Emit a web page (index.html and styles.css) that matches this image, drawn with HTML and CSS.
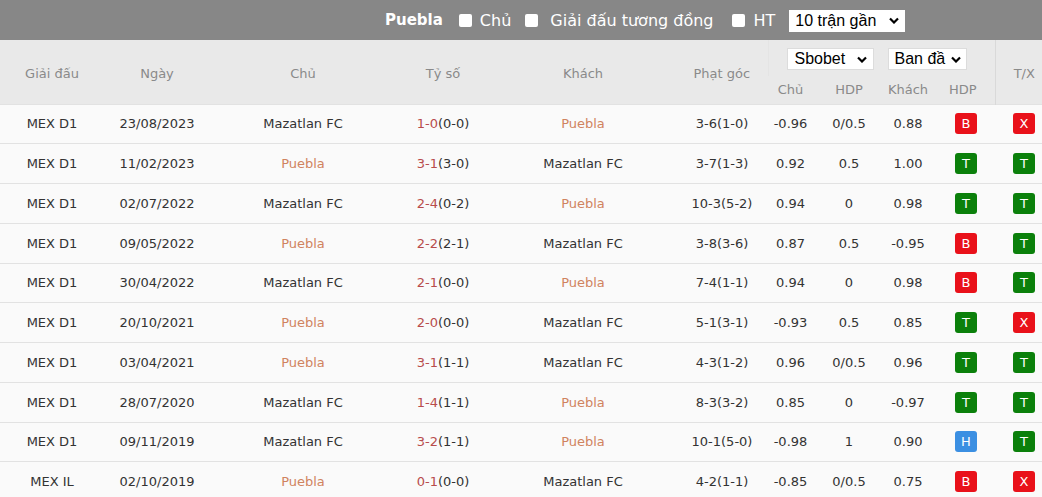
FILE: index.html
```html
<!DOCTYPE html>
<html lang="vi">
<head>
<meta charset="utf-8">
<title>Puebla</title>
<link rel="stylesheet" href="styles.css">
</head>
<body>
<div class="topbar">
  <span class="team">Puebla</span>
  <label class="opt opt-home"><span class="box"></span>Chủ</label>
  <label class="opt opt-league"><span class="box"></span>Giải đấu tương đồng</label>
  <label class="opt opt-ht"><span class="box"></span>HT</label>
  <div class="select sel-top">10 trận gần<svg class="chev" viewBox="0 0 10 6"><path d="M1 1 L5 5 L9 1"/></svg></div>
</div>
<table class="grid">
  <colgroup>
    <col class="c-league"><col class="c-date"><col class="c-home"><col class="c-score"><col class="c-away"><col class="c-corner"><col class="c-oh"><col class="c-hdp"><col class="c-oa"><col class="c-res"><col class="c-tx">
  </colgroup>
  <thead>
    <tr class="h1">
      <th rowspan="2">Giải đấu</th>
      <th rowspan="2">Ngày</th>
      <th rowspan="2">Chủ</th>
      <th rowspan="2">Tỷ số</th>
      <th rowspan="2">Khách</th>
      <th rowspan="2">Phạt góc</th>
      <th colspan="4" class="odds-sel">
        <div class="sels">
          <div class="select sel-book">Sbobet<svg class="chev" viewBox="0 0 10 6"><path d="M1 1 L5 5 L9 1"/></svg></div>
          <div class="select sel-start">Ban đầ<svg class="chev" viewBox="0 0 10 6"><path d="M1 1 L5 5 L9 1"/></svg></div>
        </div>
      </th>
      <th rowspan="2" class="tx">T/X</th>
    </tr>
    <tr class="h2">
      <th>Chủ</th><th>HDP</th><th>Khách</th><th>HDP</th>
    </tr>
  </thead>
  <tbody>
    <tr><td>MEX D1</td><td>23/08/2023</td><td>Mazatlan FC</td><td><span class="sc">1-0</span>(0-0)</td><td class="hl">Puebla</td><td>3-6(1-0)</td><td>-0.96</td><td>0/0.5</td><td>0.88</td><td class="res"><span class="bd r">B</span></td><td><span class="bd r">X</span></td></tr>
    <tr><td>MEX D1</td><td>11/02/2023</td><td class="hl">Puebla</td><td><span class="sc">3-1</span>(3-0)</td><td>Mazatlan FC</td><td>3-7(1-3)</td><td>0.92</td><td>0.5</td><td>1.00</td><td class="res"><span class="bd g">T</span></td><td><span class="bd g">T</span></td></tr>
    <tr><td>MEX D1</td><td>02/07/2022</td><td>Mazatlan FC</td><td><span class="sc">2-4</span>(0-2)</td><td class="hl">Puebla</td><td>10-3(5-2)</td><td>0.94</td><td>0</td><td>0.98</td><td class="res"><span class="bd g">T</span></td><td><span class="bd g">T</span></td></tr>
    <tr><td>MEX D1</td><td>09/05/2022</td><td class="hl">Puebla</td><td><span class="sc">2-2</span>(2-1)</td><td>Mazatlan FC</td><td>3-8(3-6)</td><td>0.87</td><td>0.5</td><td>-0.95</td><td class="res"><span class="bd r">B</span></td><td><span class="bd g">T</span></td></tr>
    <tr><td>MEX D1</td><td>30/04/2022</td><td>Mazatlan FC</td><td><span class="sc">2-1</span>(0-0)</td><td class="hl">Puebla</td><td>7-4(1-1)</td><td>0.94</td><td>0</td><td>0.98</td><td class="res"><span class="bd r">B</span></td><td><span class="bd g">T</span></td></tr>
    <tr><td>MEX D1</td><td>20/10/2021</td><td class="hl">Puebla</td><td><span class="sc">2-0</span>(0-0)</td><td>Mazatlan FC</td><td>5-1(3-1)</td><td>-0.93</td><td>0.5</td><td>0.85</td><td class="res"><span class="bd g">T</span></td><td><span class="bd r">X</span></td></tr>
    <tr><td>MEX D1</td><td>03/04/2021</td><td class="hl">Puebla</td><td><span class="sc">3-1</span>(1-1)</td><td>Mazatlan FC</td><td>4-3(1-2)</td><td>0.96</td><td>0/0.5</td><td>0.96</td><td class="res"><span class="bd g">T</span></td><td><span class="bd g">T</span></td></tr>
    <tr><td>MEX D1</td><td>28/07/2020</td><td>Mazatlan FC</td><td><span class="sc">1-4</span>(1-1)</td><td class="hl">Puebla</td><td>8-3(3-2)</td><td>0.85</td><td>0</td><td>-0.97</td><td class="res"><span class="bd g">T</span></td><td><span class="bd g">T</span></td></tr>
    <tr><td>MEX D1</td><td>09/11/2019</td><td>Mazatlan FC</td><td><span class="sc">3-2</span>(1-1)</td><td class="hl">Puebla</td><td>10-1(5-0)</td><td>-0.98</td><td>1</td><td>0.90</td><td class="res"><span class="bd b">H</span></td><td><span class="bd g">T</span></td></tr>
    <tr><td>MEX IL</td><td>02/10/2019</td><td class="hl">Puebla</td><td><span class="sc">0-1</span>(0-0)</td><td>Mazatlan FC</td><td>4-2(1-1)</td><td>-0.85</td><td>0/0.5</td><td>0.75</td><td class="res"><span class="bd r">B</span></td><td><span class="bd r">X</span></td></tr>
  </tbody>
</table>
</body>
</html>
```
FILE: styles.css
```css
html, body {
  margin: 0;
  padding: 0;
  overflow: hidden;
  background: #fafafa;
  font-family: "DejaVu Sans", Tahoma, sans-serif;
}

.topbar {
  height: 40px;
  background: #878787;
  display: flex;
  align-items: center;
  padding-left: 385px;
  color: #fff;
  font-size: 16px;
  box-sizing: border-box;
}
.team {
  font-weight: bold;
  font-size: 15px;
  margin-right: 16px;
}
.opt {
  display: flex;
  align-items: center;
}
.box {
  width: 13px;
  height: 13px;
  background: #fff;
  border-radius: 2px;
  margin-right: 8px;
}
.opt-home { margin-right: 14px; }
.opt-league { margin-right: 18px; }
.opt-league .box { margin-right: 12px; }
.opt-ht { margin-right: 14px; }
.opt-ht .box { margin-right: 9px; }

.select {
  display: flex;
  align-items: center;
  justify-content: space-between;
  background: #fff;
  color: #000;
  font-family: "Liberation Sans", Arial, sans-serif;
  font-size: 16px;
  height: 22px;
  box-sizing: border-box;
  padding: 0 6px;
  white-space: nowrap;
}
.chev {
  width: 10px;
  height: 7px;
  flex: none;
  margin-left: 6px;
  fill: none;
  stroke: #000;
  stroke-width: 2.2;
}
.sel-top {
  width: 116px;
  margin-top: 1px;
}
.sel-book {
  width: 87px;
  border: 1px solid #dcdcdc;
  padding-left: 7px;
}
.sel-start {
  width: 79px;
  border: 1px solid #dcdcdc;
  padding-right: 5px;
}
.sel-start .chev { margin-left: 0; }

.grid {
  width: 1053px;
  table-layout: fixed;
  border-collapse: collapse;
  font-size: 13px;
}
.c-league { width: 104px; }
.c-date { width: 106px; }
.c-home { width: 186px; }
.c-score { width: 94px; }
.c-away { width: 186px; }
.c-corner { width: 92px; }
.c-oh { width: 45px; }
.c-hdp { width: 72px; }
.c-oa { width: 46px; }
.c-res { width: 64px; }
.c-tx { width: 58px; }

thead th {
  background: #e9e9e9;
  color: #8a8a8a;
  font-weight: normal;
  text-align: center;
  padding: 4px 0 0;
}
.h1 { height: 36px; }
.h2 { height: 28px; }
.h2 th { vertical-align: top; padding-top: 6px; }
.odds-sel {
  vertical-align: top;
  border-left: 1px solid #e4e4e4;
}
thead th.odds-sel { padding: 0; }
.sels {
  display: flex;
  padding: 8px 0 0 18px;
  gap: 14px;
}
.tx { border-left: 1px solid #d9d9d9; }

tbody tr {
  height: 39.75px;
  border-top: 1px solid #e2e2e2;
}
tbody td {
  text-align: center;
  color: #333;
  padding: 0;
  white-space: nowrap;
}
td.hl { color: #d0835f; }
.sc { color: #b84c4c; }
td.res { padding-left: 6px; }

.bd {
  display: inline-block;
  width: 22px;
  height: 21px;
  line-height: 21px;
  border-radius: 3px;
  color: #fff;
  font-size: 13px;
  vertical-align: middle;
}
.bd.r { background: #e9111a; }
.bd.g { background: #0b800b; }
.bd.b { background: #3b8fe2; }
```
